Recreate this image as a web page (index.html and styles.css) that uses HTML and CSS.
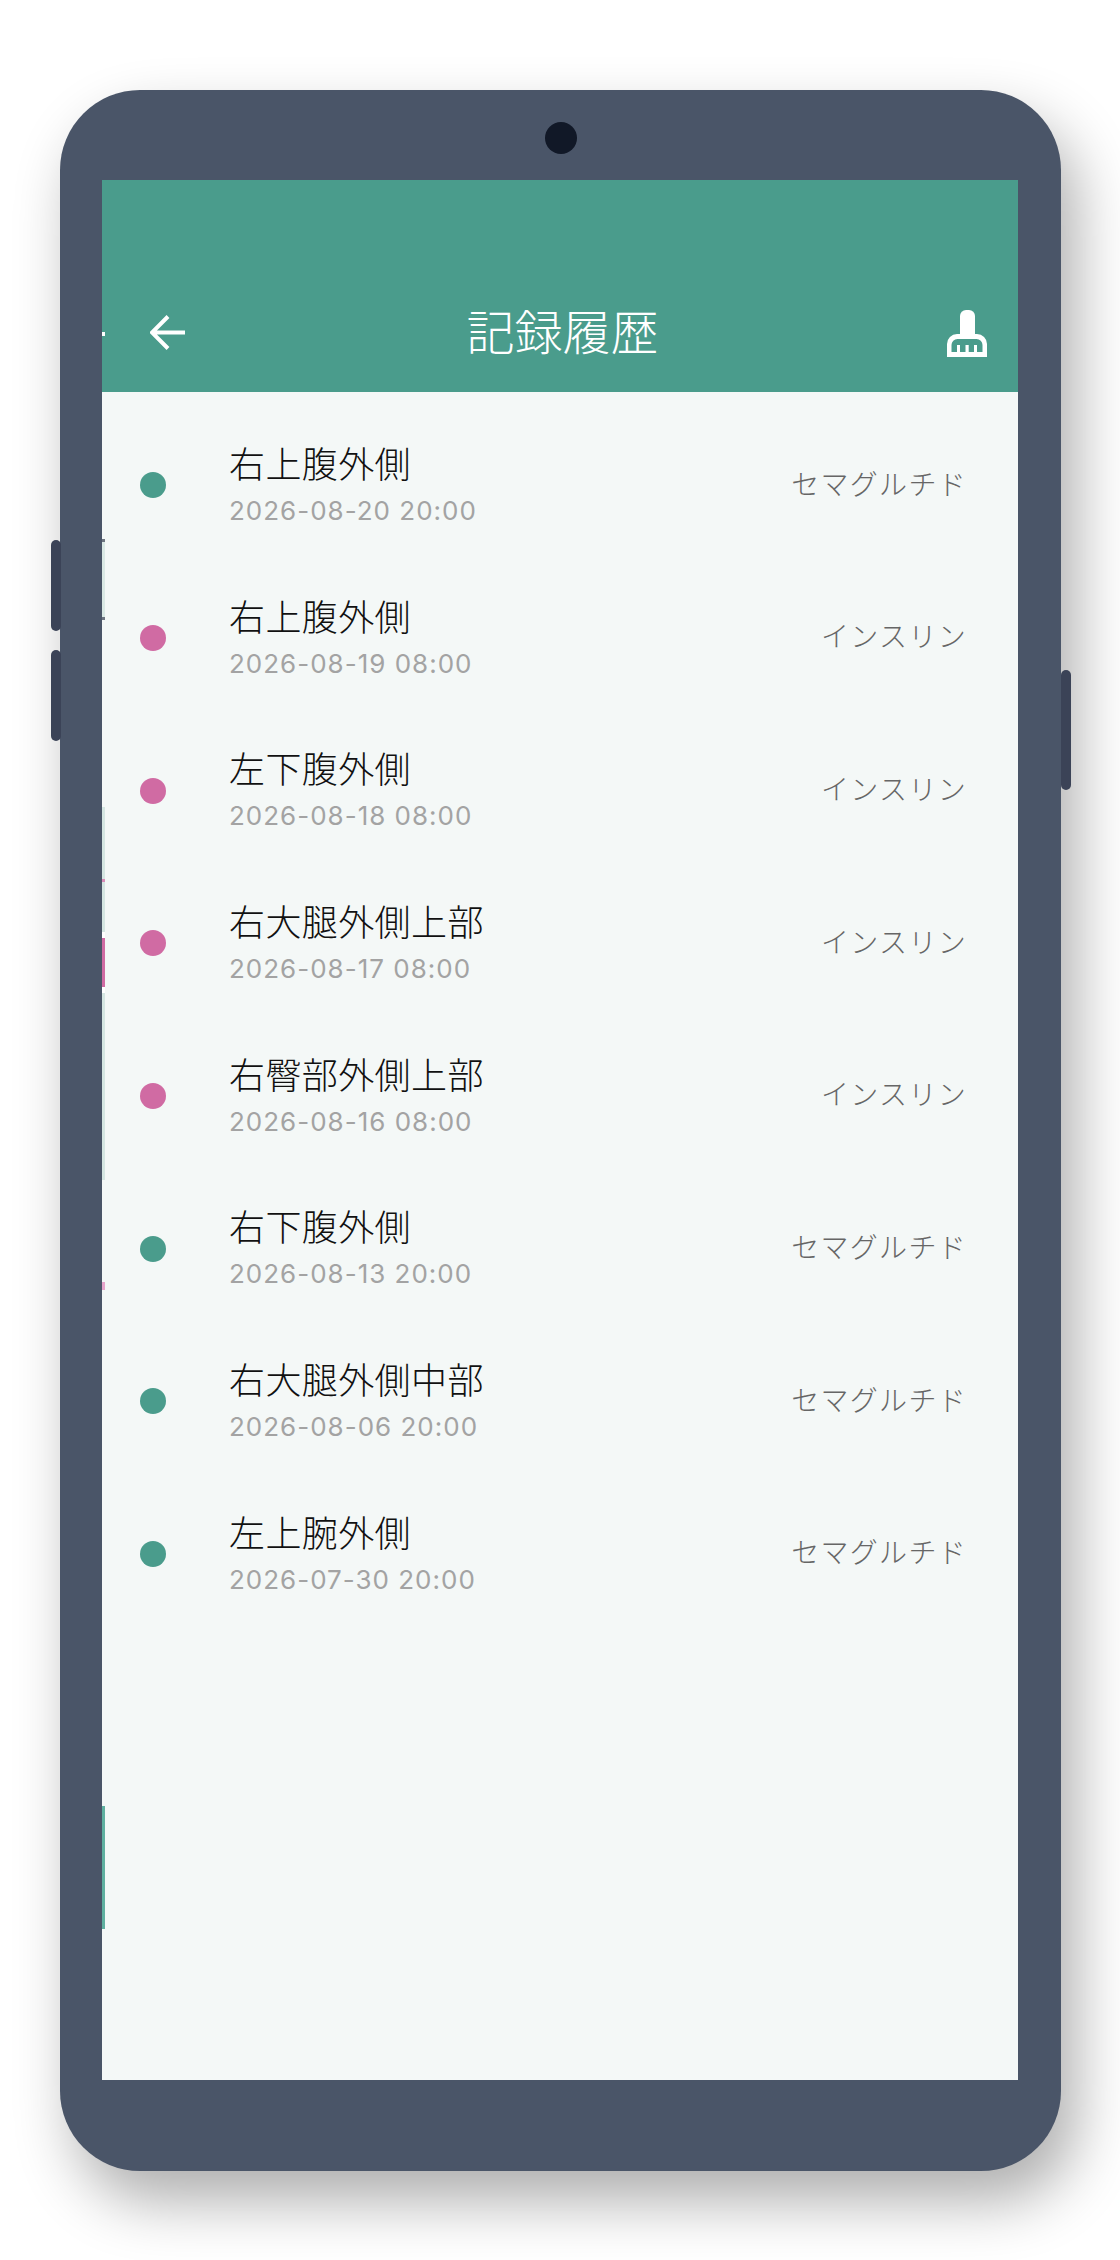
FILE: index.html
```html
<!DOCTYPE html>
<html lang="ja">

<head>
    <meta charset="UTF-8">
    <meta name="viewport" content="width=device-width, initial-scale=1.0">
    <title>記録履歴</title>
    <link rel="stylesheet" href="styles.css">
</head>

<body>
    <div class="phone">
        <span class="side-btn vol-up"></span>
        <span class="side-btn vol-down"></span>
        <span class="side-btn power"></span>
        <span class="camera"></span>

        <div class="screen">
            <header class="topbar">
                <svg class="icon-back" viewBox="0 0 36 36" width="36" height="36">
                    <path d="M35 17.5H3M18 1.5L2 17.5L18 33.5" fill="none" stroke="#fff" stroke-width="4" />
                </svg>
                <h1>記録履歴</h1>
                <svg class="icon-broom" viewBox="0 0 40 47" width="40" height="47">
                    <path fill="#fff" d="M13 25V6a6 6 0 0 1 6-6h3a6 6 0 0 1 6 6V25Z" />
                    <path fill="#fff" fill-rule="evenodd"
                        d="M0 47V34a10 10 0 0 1 10-10H30a10 10 0 0 1 10 10V47ZM4.500 42H35.500V35a6 6 0 0 0-6-6H10.500a6 6 0 0 0-6 6Z" />
                    <path fill="#fff" d="M10 35h3v8h-3ZM18.500 35h3.200v8h-3.200ZM27 35h3v8h-3Z" />
                </svg>
            </header>

            <ul class="list">
                <li class="row">
                    <span class="dot green"></span>
                    <div class="info">
                        <div class="site">右上腹外側</div>
                        <div class="date">2026-08-20 20:00</div>
                    </div>
                    <span class="drug">セマグルチド</span>
                </li>
                <li class="row">
                    <span class="dot pink"></span>
                    <div class="info">
                        <div class="site">右上腹外側</div>
                        <div class="date">2026-08-19 08:00</div>
                    </div>
                    <span class="drug">インスリン</span>
                </li>
                <li class="row">
                    <span class="dot pink"></span>
                    <div class="info">
                        <div class="site">左下腹外側</div>
                        <div class="date">2026-08-18 08:00</div>
                    </div>
                    <span class="drug">インスリン</span>
                </li>
                <li class="row">
                    <span class="dot pink"></span>
                    <div class="info">
                        <div class="site">右大腿外側上部</div>
                        <div class="date">2026-08-17 08:00</div>
                    </div>
                    <span class="drug">インスリン</span>
                </li>
                <li class="row">
                    <span class="dot pink"></span>
                    <div class="info">
                        <div class="site">右臀部外側上部</div>
                        <div class="date">2026-08-16 08:00</div>
                    </div>
                    <span class="drug">インスリン</span>
                </li>
                <li class="row">
                    <span class="dot green"></span>
                    <div class="info">
                        <div class="site">右下腹外側</div>
                        <div class="date">2026-08-13 20:00</div>
                    </div>
                    <span class="drug">セマグルチド</span>
                </li>
                <li class="row">
                    <span class="dot green"></span>
                    <div class="info">
                        <div class="site">右大腿外側中部</div>
                        <div class="date">2026-08-06 20:00</div>
                    </div>
                    <span class="drug">セマグルチド</span>
                </li>
                <li class="row">
                    <span class="dot green"></span>
                    <div class="info">
                        <div class="site">左上腕外側</div>
                        <div class="date">2026-07-30 20:00</div>
                    </div>
                    <span class="drug">セマグルチド</span>
                </li>
            </ul>

            <!-- edge of the previous page, still showing along the left side -->
            <span class="peek p-white"></span>
            <span class="peek p-tick-a"></span>
            <span class="peek p-pale-a"></span>
            <span class="peek p-tick-b"></span>
            <span class="peek p-pale-b"></span>
            <span class="peek p-line"></span>
            <span class="peek p-gap"></span>
            <span class="peek p-block"></span>
            <span class="peek p-pale-c"></span>
            <span class="peek p-mark"></span>
            <span class="peek p-teal"></span>
        </div>
    </div>
</body>

</html>
```

FILE: styles.css
```css
body {
    margin: 0;
    background-color: #fff;
    font-family: "Noto Sans CJK JP", "Noto Sans", sans-serif;
}

.phone {
    position: relative;
    box-sizing: border-box;
    width: 1001px;
    height: 2081px;
    margin: 90px 59px 89px 60px;
    padding: 90px 43px 91px 42px;
    background-color: #4a5568;
    border-radius: 80px;
    box-shadow: 15px 30px 60px rgba(0, 0, 0, 0.32);
}

.side-btn {
    position: absolute;
    width: 10px;
    background-color: #3b4357;
    border-radius: 5px;
}

.vol-up {
    left: -9px;
    top: 450px;
    height: 91px;
}

.vol-down {
    left: -9px;
    top: 560px;
    height: 91px;
}

.power {
    right: -10px;
    top: 580px;
    height: 120px;
}

.camera {
    position: absolute;
    left: 485px;
    top: 32px;
    width: 32px;
    height: 32px;
    background-color: #111827;
    border-radius: 50%;
}

.screen {
    position: relative;
    display: flex;
    flex-direction: column;
    height: 1900px;
    background-color: #f4f8f7;
    overflow: hidden;
}

.topbar {
    display: flex;
    align-items: center;
    justify-content: space-between;
    box-sizing: border-box;
    height: 212px;
    padding: 94px 31px 0 48px;
    background-color: #4a9c8c;
}

.topbar h1 {
    margin: 0 8px 9px 0;
    color: #fff;
    font-size: 48px;
    font-weight: 300;
    line-height: 48px;
}

.icon-back {
    display: block;
}

.icon-broom {
    display: block;
}

.list {
    margin: 0;
    padding: 16.800px 0 0;
    list-style: none;
}

.row {
    display: flex;
    align-items: center;
    box-sizing: border-box;
    height: 152.7px;
    padding: 0 51px 0 38px;
}

.dot {
    flex: none;
    width: 26px;
    height: 26px;
    margin-right: 63px;
    border-radius: 50%;
}

.green {
    background-color: #4a9c8c;
}

.pink {
    background-color: #d06ba3;
}

.info {
    flex: 1;
    padding-bottom: 5.500px;
}

.site {
    color: #111;
    font-size: 36px;
    font-weight: 300;
    letter-spacing: 0.4px;
    line-height: 48px;
}

.date {
    margin-top: 9px;
    color: #a3a3a3;
    font-family: Inter, "Noto Sans", sans-serif;
    font-size: 26px;
    letter-spacing: 1px;
    line-height: 32px;
}

.drug {
    margin-bottom: 5px;
    color: #666;
    font-size: 28px;
    font-weight: 300;
    letter-spacing: 1.3px;
}

/* slivers of the page underneath, 3px wide */
.peek {
    position: absolute;
    left: 0;
    width: 3px;
}

.p-white {
    top: 152px;
    height: 4px;
    background-color: #fff;
}

.p-tick-a {
    top: 359px;
    height: 3px;
    background-color: #6d7580;
}

.p-pale-a {
    top: 362px;
    height: 75px;
    background-color: #dae9e5;
}

.p-tick-b {
    top: 437px;
    height: 3px;
    background-color: #6d7580;
}

.p-pale-b {
    top: 627px;
    height: 125px;
    background-color: #d5e6e2;
}

.p-line {
    top: 699px;
    height: 3px;
    background-color: #d88cb8;
}

.p-gap {
    top: 752px;
    height: 61px;
    background-color: #fff;
}

.p-block {
    top: 758px;
    height: 49px;
    background-color: #d06ba3;
}

.p-pale-c {
    top: 813px;
    height: 187px;
    background-color: #d5e6e2;
}

.p-mark {
    top: 1102px;
    height: 8px;
    background-color: #e6a4cb;
}

.p-teal {
    top: 1626px;
    height: 123px;
    background-color: #5fb0a0;
}
```
